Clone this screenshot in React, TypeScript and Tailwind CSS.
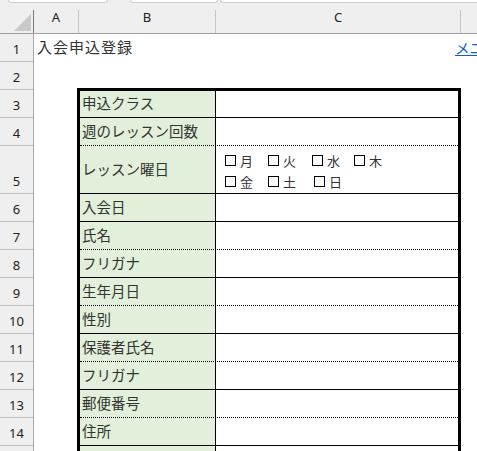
import React from "react";

type Row = { n: number; h: number };
const rowHeights: Row[] = [
  { n: 1, h: 28 }, { n: 2, h: 28 }, { n: 3, h: 28 }, { n: 4, h: 28 }, { n: 5, h: 48 },
  { n: 6, h: 28 }, { n: 7, h: 28 }, { n: 8, h: 28 }, { n: 9, h: 28 }, { n: 10, h: 28 },
  { n: 11, h: 28 }, { n: 12, h: 28 }, { n: 13, h: 28 }, { n: 14, h: 28 }, { n: 15, h: 28 },
];

type TRow = { label: string; dotted: boolean; tall?: boolean };
const tableRows: TRow[] = [
  { label: "申込クラス", dotted: false },
  { label: "週のレッスン回数", dotted: true },
  { label: "レッスン曜日", dotted: false, tall: true },
  { label: "入会日", dotted: false },
  { label: "氏名", dotted: true },
  { label: "フリガナ", dotted: false },
  { label: "生年月日", dotted: true },
  { label: "性別", dotted: false },
  { label: "保護者氏名", dotted: true },
  { label: "フリガナ", dotted: false },
  { label: "郵便番号", dotted: true },
  { label: "住所", dotted: false },
  { label: "", dotted: false },
];

const jp = { fontFamily: '"Noto Sans CJK JP", "Noto Sans", sans-serif' };
const ui = { fontFamily: '"Noto Sans", "Liberation Sans", sans-serif' };

function Day({ c, w }: { c: string; w: string }) {
  return (
    <div className={`flex items-center ${w}`}>
      <span className="block w-[11px] h-[11px] border border-black box-border shrink-0" />
      <span className="ml-[4px] text-[13px] leading-[20px] text-[#333]" style={jp}>{c}</span>
    </div>
  );
}

export default function App() {
  return (
    <div className="w-[477px] h-[451px] overflow-hidden bg-white relative">
      {/* top strip */}
      <div className="h-[3px] bg-[#efefef] flex">
        <div className="ml-[8px] w-[100px] h-[3px] bg-white border-b border-x border-[#cfcfcf] rounded-b-[4px]" />
        <div className="ml-[22px] w-[88px] h-[3px] bg-white border-b border-x border-[#cfcfcf] rounded-b-[4px]" />
        <div className="ml-[2px] flex-1 h-[3px] bg-white border-b border-l border-[#cfcfcf] rounded-bl-[4px]" />
      </div>
      {/* column header */}
      <div className="h-[31px] bg-[#efefef] border-b border-[#9f9f9f] flex text-[13px] text-[#222]" style={ui}>
        <div className="w-[33px] shrink-0 flex items-end justify-end pr-[2px] pb-[2px]">
          <svg width="17" height="17" viewBox="0 0 17 17">
            <polygon points="17,0 17,17 0,17" fill="#c9c9c9" />
          </svg>
        </div>
        <div className="w-px self-end h-[23px] bg-[#7a7a7a]" />
        <div className="w-[44px] shrink-0 flex items-center justify-center">A</div>
        <div className="w-px self-end h-[23px] bg-[#c4c4c4]" />
        <div className="w-[136px] shrink-0 flex items-center justify-center">B</div>
        <div className="w-px self-end h-[23px] bg-[#c4c4c4]" />
        <div className="w-[244px] shrink-0 flex items-center justify-center">C</div>
        <div className="w-px self-end h-[23px] bg-[#c4c4c4]" />
        <div className="flex-1" />
      </div>
      {/* body */}
      <div className="flex">
        {/* row headers */}
        <div className="w-[34px] shrink-0 bg-[#efefef] border-r border-[#a6a6a6] flex flex-col text-[13px] text-[#222]" style={ui}>
          {rowHeights.map((r) => (
            <div
              key={r.n}
              className={`${r.h === 48 ? "h-[48px]" : "h-[28px]"} border-b border-[#c2c2c2] flex items-end justify-center pb-[3px] leading-[18px]`}
            >
              {r.n < 15 ? r.n : ""}
            </div>
          ))}
        </div>
        {/* cells */}
        <div className="flex-1 flex flex-col">
          <div className="h-[28px] grid grid-cols-[421px_1fr] items-center pb-[1px]">
            <div className="pl-[3px] text-[15px] tracking-[1px] text-[#333] whitespace-nowrap" style={jp}>入会申込登録</div>
            <div className="text-[14.5px] text-[#0563c1] underline whitespace-nowrap overflow-hidden" style={jp}>メニューへ</div>
          </div>
          <div className="h-[26px]" />
          <div className="ml-[43px] w-[384px] border-t-[3px] border-x-[3px] border-black">
            {tableRows.map((r, i) => {
              const h = i === 0 ? "h-[27px]" : r.tall ? "h-[48px]" : "h-[28px]";
              const b = r.dotted ? "border-dotted" : "border-solid";
              return (
                <div key={i} className={`${h} flex border-b border-black ${b}`}>
                  <div
                    className="w-[136px] shrink-0 bg-[#e2efda] border-r border-black border-solid flex items-center pl-[2px] pb-[2px] text-[14.5px] text-[#333] whitespace-nowrap"
                    style={jp}
                  >
                    {r.label}
                  </div>
                  <div className="flex-1">
                    {r.tall && (
                      <div className="pl-[9px] pt-[4px] flex flex-col">
                        <div className="flex h-[21px]">
                          <Day c="月" w="w-[43px]" />
                          <Day c="火" w="w-[44px]" />
                          <Day c="水" w="w-[42px]" />
                          <Day c="木" w="w-[43px]" />
                        </div>
                        <div className="flex h-[21px]">
                          <Day c="金" w="w-[43px]" />
                          <Day c="土" w="w-[46px]" />
                          <Day c="日" w="w-[43px]" />
                        </div>
                      </div>
                    )}
                  </div>
                </div>
              );
            })}
          </div>
        </div>
      </div>
    </div>
  );
}
